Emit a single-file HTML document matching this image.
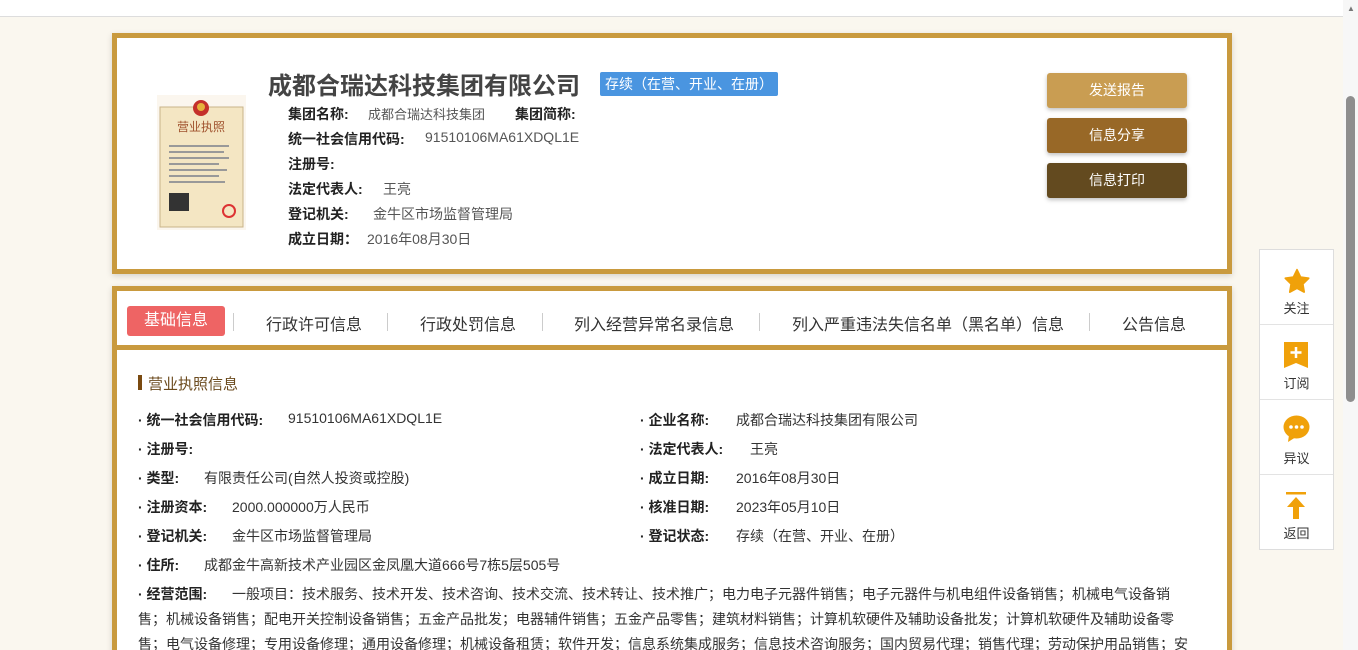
<!DOCTYPE html>
<html><head><meta charset="utf-8"><style>
*{margin:0;padding:0;box-sizing:border-box}
html,body{width:1358px;height:650px;overflow:hidden}
body{background:#faf7ef;font-family:"Liberation Sans","Noto Sans CJK SC",sans-serif;position:relative;color:#333}
.a{position:absolute;white-space:nowrap}
.topbar{left:0;top:0;width:1343px;height:17px;background:#fff;border-bottom:1px solid #ddd}
.sb{left:1343px;top:0;width:15px;height:650px;background:#f7f7f7}
.thumb{left:1346px;top:96px;width:9px;height:306px;background:#8e8e8e;border-radius:5px}
.card{border:5px solid #c99a3e;background:#fff;box-shadow:0 2px 6px rgba(0,0,0,.15)}
.lbl{font-size:14px;font-weight:bold;color:#222}
.val{font-size:14px;color:#555}
.btn{left:1047px;width:140px;height:35px;border-radius:3px;color:#fff;font-size:14px;text-align:center;line-height:35px;box-shadow:0 2px 4px rgba(0,0,0,.25)}
.tab{font-size:16px;color:#333;top:311px}
.sep{top:313px;width:1px;height:18px;background:#ccc}
.r{font-size:14px;color:#333}
.b{font-size:14px;font-weight:bold;color:#222}
.side{left:1259px;top:249px;width:75px;height:301px;background:#fff;border:1px solid #ddd}
.si{position:absolute;left:0;width:73px;height:75px;border-bottom:1px solid #e3e3e3;text-align:center;font-size:13px;color:#333}
.si span{position:absolute;left:0;right:0;top:48px}
</style></head><body>
<div class="a topbar"></div>
<div class="a sb"></div><div class="a thumb"></div>
<div class="a" style="left:1347px;top:4px;font-size:8px;color:#777">▲</div>

<div class="a card" style="left:112px;top:33px;width:1120px;height:241px"></div>
<svg class="a" style="left:157px;top:95px" width="89" height="135" viewBox="0 0 89 135">
<rect x="0" y="0" width="89" height="135" fill="#fbf6ee"/>
<rect x="3" y="12" width="83" height="120" fill="#f4e6c3" stroke="#c9b48a"/>
<circle cx="44" cy="13" r="8" fill="#c4302b"/><circle cx="44" cy="12" r="4" fill="#e6b23c"/>
<text x="44" y="36" font-size="12" fill="#a0522d" text-anchor="middle" font-family="Noto Sans CJK SC">营业执照</text>
<g fill="#999"><rect x="12" y="50" width="60" height="2"/><rect x="12" y="56" width="55" height="2"/><rect x="12" y="62" width="60" height="2"/><rect x="12" y="68" width="50" height="2"/><rect x="12" y="74" width="58" height="2"/><rect x="12" y="80" width="50" height="2"/><rect x="12" y="86" width="56" height="2"/></g>
<rect x="12" y="98" width="20" height="18" fill="#333"/>
<circle cx="72" cy="116" r="6" fill="none" stroke="#d33" stroke-width="2"/>
</svg>
<div class="a" style="left:268px;top:66px;font-size:24px;font-weight:bold;color:#444">成都合瑞达科技集团有限公司</div>
<div class="a" style="left:600px;top:72px;width:178px;height:24px;background:#4a95e0;color:#fff;font-size:14px;line-height:24px;padding-left:5px;border-radius:2px">存续（在营、开业、在册）</div>
<div class="a lbl" style="left:288px;top:104px">集团名称:</div><div class="a val" style="left:368px;top:104px;font-size:13px">成都合瑞达科技集团</div>
<div class="a lbl" style="left:515px;top:104px">集团简称:</div>
<div class="a lbl" style="left:288px;top:129px">统一社会信用代码:</div><div class="a val" style="left:425px;top:129px">91510106MA61XDQL1E</div>
<div class="a lbl" style="left:288px;top:154px">注册号:</div>
<div class="a lbl" style="left:288px;top:179px">法定代表人:</div><div class="a val" style="left:383px;top:179px">王亮</div>
<div class="a lbl" style="left:288px;top:204px">登记机关:</div><div class="a val" style="left:373px;top:204px">金牛区市场监督管理局</div>
<div class="a lbl" style="left:288px;top:229px">成立日期：</div><div class="a val" style="left:367px;top:229px">2016年08月30日</div>
<div class="a btn" style="top:73px;background:#c99d52">发送报告</div>
<div class="a btn" style="top:118px;background:#986827">信息分享</div>
<div class="a btn" style="top:163px;background:#634a1f">信息打印</div>

<div class="a card" style="left:112px;top:286px;width:1120px;height:370px;border-bottom:none"></div>
<div class="a" style="left:117px;top:345px;width:1110px;height:5px;background:#c99a3e"></div>
<div class="a" style="left:127px;top:306px;width:98px;height:30px;background:#ee6464;border-radius:3px;color:#fff;font-size:16px;text-align:center;line-height:30px">基础信息</div>
<div class="a sep" style="left:233px"></div>
<div class="a tab" style="left:266px">行政许可信息</div><div class="a sep" style="left:387px"></div>
<div class="a tab" style="left:420px">行政处罚信息</div><div class="a sep" style="left:542px"></div>
<div class="a tab" style="left:574px">列入经营异常名录信息</div><div class="a sep" style="left:759px"></div>
<div class="a tab" style="left:792px">列入严重违法失信名单（黑名单）信息</div><div class="a sep" style="left:1089px"></div>
<div class="a tab" style="left:1122px">公告信息</div>

<div class="a" style="left:138px;top:375px;width:4px;height:15px;background:#7a4a10"></div>
<div class="a" style="left:148px;top:373px;font-size:15px;color:#6b4a1d">营业执照信息</div>

<div class="a b" style="left:138px;top:410px">· 统一社会信用代码:</div><div class="a r" style="left:288px;top:410px">91510106MA61XDQL1E</div>
<div class="a b" style="left:640px;top:410px">· 企业名称:</div><div class="a r" style="left:736px;top:410px">成都合瑞达科技集团有限公司</div>
<div class="a b" style="left:138px;top:439px">· 注册号:</div>
<div class="a b" style="left:640px;top:439px">· 法定代表人:</div><div class="a r" style="left:750px;top:439px">王亮</div>
<div class="a b" style="left:138px;top:468px">· 类型:</div><div class="a r" style="left:204px;top:468px">有限责任公司(自然人投资或控股)</div>
<div class="a b" style="left:640px;top:468px">· 成立日期:</div><div class="a r" style="left:736px;top:468px">2016年08月30日</div>
<div class="a b" style="left:138px;top:497px">· 注册资本:</div><div class="a r" style="left:232px;top:497px">2000.000000万人民币</div>
<div class="a b" style="left:640px;top:497px">· 核准日期:</div><div class="a r" style="left:736px;top:497px">2023年05月10日</div>
<div class="a b" style="left:138px;top:526px">· 登记机关:</div><div class="a r" style="left:232px;top:526px">金牛区市场监督管理局</div>
<div class="a b" style="left:640px;top:526px">· 登记状态:</div><div class="a r" style="left:736px;top:526px">存续（在营、开业、在册）</div>
<div class="a b" style="left:138px;top:555px">· 住所:</div><div class="a r" style="left:204px;top:555px">成都金牛高新技术产业园区金凤凰大道666号7栋5层505号</div>
<div class="a b" style="left:138px;top:584px">· 经营范围:</div><div class="a r" style="left:232px;top:584px">一般项目：技术服务、技术开发、技术咨询、技术交流、技术转让、技术推广；电力电子元器件销售；电子元器件与机电组件设备销售；机械电气设备销</div>
<div class="a r" style="left:138px;top:609px">售；机械设备销售；配电开关控制设备销售；五金产品批发；电器辅件销售；五金产品零售；建筑材料销售；计算机软硬件及辅助设备批发；计算机软硬件及辅助设备零</div>
<div class="a r" style="left:138px;top:634px">售；电气设备修理；专用设备修理；通用设备修理；机械设备租赁；软件开发；信息系统集成服务；信息技术咨询服务；国内贸易代理；销售代理；劳动保护用品销售；安</div>

<div class="a side">
<div class="si" style="top:0"><svg style="position:absolute;left:23px;top:18px" width="28" height="27" viewBox="0 0 24 24"><path d="M12 1.5l3.2 6.6 7.2 1-5.2 5.1 1.2 7.2L12 18l-6.4 3.4 1.2-7.2L1.6 9.1l7.2-1z" fill="#f0a10a" stroke="#f0a10a" stroke-linejoin="round" stroke-width="1.5"/></svg><span>关注</span></div>
<div class="si" style="top:75px"><svg style="position:absolute;left:24px;top:17px" width="24" height="26" viewBox="0 0 24 26"><path d="M0 0h24v26l-12-5-12 5z" fill="#f0a10a"/><path d="M12 5v11M6.5 10.5h11" stroke="#fff" stroke-width="2.5"/></svg><span>订阅</span></div>
<div class="si" style="top:150px"><svg style="position:absolute;left:23px;top:15px" width="27" height="27" viewBox="0 0 27 27"><ellipse cx="13.5" cy="12" rx="13" ry="11.5" fill="#f0a10a"/><path d="M6 20l-1 7 8-5z" fill="#f0a10a"/><circle cx="8" cy="12" r="1.8" fill="#fff"/><circle cx="13.5" cy="12" r="1.8" fill="#fff"/><circle cx="19" cy="12" r="1.8" fill="#fff"/></svg><span>异议</span></div>
<div class="si" style="top:225px;border:none"><svg style="position:absolute;left:24px;top:17px" width="26" height="28" viewBox="0 0 26 28"><rect x="2" y="0" width="20" height="2.5" fill="#f0a10a"/><path d="M12 5l-9 10h6v12h6V15h6z" fill="#f0a10a"/></svg><span>返回</span></div>
</div>
</body></html>
